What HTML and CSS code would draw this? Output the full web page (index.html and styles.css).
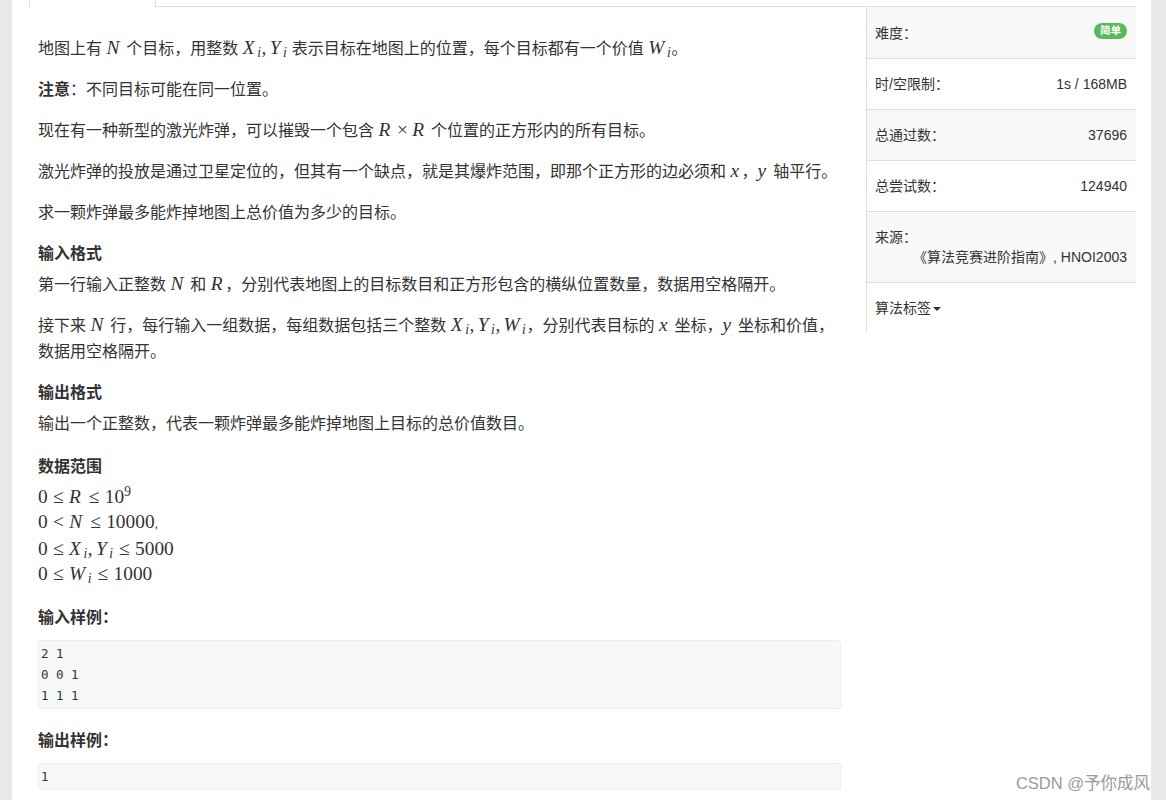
FILE: index.html
```html
<!DOCTYPE html>
<html lang="zh-CN">
<head>
<meta charset="utf-8">
<title>激光炸弹</title>
<link rel="stylesheet" href="styles.css">
</head>
<body>
<div class="page">
  <div class="tabs">
    <div class="tab-active"></div>
    <div class="tab-line"></div>
  </div>
  <div class="content">
    <div class="main">
      <p>地图上有 <span class="m"><i>N</i></span> 个目标，用整数 <span class="m"><i>X</i><sub>i</sub><span class="pc">,</span><i>Y</i><sub>i</sub></span> 表示目标在地图上的位置，每个目标都有一个价值 <span class="m"><i>W</i><sub>i</sub></span>。</p>
      <p><b>注意</b>：不同目标可能在同一位置。</p>
      <p>现在有一种新型的激光炸弹，可以摧毁一个包含 <span class="m"><i>R</i><span class="bin">×</span><i>R</i></span> 个位置的正方形内的所有目标。</p>
      <p>激光炸弹的投放是通过卫星定位的，但其有一个缺点，就是其爆炸范围，即那个正方形的边必须和 <span class="m"><i>x</i></span>，<span class="m"><i>y</i></span> 轴平行。</p>
      <p>求一颗炸弹最多能炸掉地图上总价值为多少的目标。</p>

      <h4 class="head">输入格式</h4>
      <p>第一行输入正整数 <span class="m"><i>N</i></span> 和 <span class="m"><i>R</i></span>，分别代表地图上的目标数目和正方形包含的横纵位置数量，数据用空格隔开。</p>
      <p>接下来 <span class="m"><i>N</i></span> 行，每行输入一组数据，每组数据包括三个整数 <span class="m"><i>X</i><sub>i</sub><span class="pc">,</span><i>Y</i><sub>i</sub><span class="pc">,</span><i>W</i><sub>i</sub></span>，分别代表目标的 <span class="m"><i>x</i></span> 坐标，<span class="m"><i>y</i></span> 坐标和价值，数据用空格隔开。</p>

      <h4 class="head">输出格式</h4>
      <p>输出一个正整数，代表一颗炸弹最多能炸掉地图上目标的总价值数目。</p>

      <h4 class="head range">数据范围</h4>
      <div class="mathblock">
        <div class="ml"><span class="m">0<span class="rel">≤</span><i>R</i><span class="rel">≤</span>10<sup>9</sup></span></div>
        <div class="ml"><span class="m">0<span class="rel">&lt;</span><i>N</i><span class="rel">≤</span>10000</span><span class="tc">,</span></div>
        <div class="ml"><span class="m">0<span class="rel">≤</span><i>X</i><sub>i</sub><span class="pc">,</span><i>Y</i><sub>i</sub><span class="rel">≤</span>5000</span></div>
        <div class="ml"><span class="m">0<span class="rel">≤</span><i>W</i><sub>i</sub><span class="rel">≤</span>1000</span></div>
      </div>

      <h4 class="head sample">输入样例：</h4>
      <pre class="code">2 1
0 0 1
1 1 1</pre>

      <h4 class="head sample">输出样例：</h4>
      <pre class="code last">1</pre>
    </div>

    <div class="side">
      <div class="row"><span>难度：</span><span class="badge">简单</span></div>
      <div class="row"><span>时/空限制：</span><span>1s / 168MB</span></div>
      <div class="row"><span>总通过数：</span><span>37696</span></div>
      <div class="row"><span>总尝试数：</span><span>124940</span></div>
      <div class="row src"><div>来源：</div><div class="val">《算法竞赛进阶指南》, HNOI2003</div></div>
      <div class="row"><span>算法标签<span class="caret"></span></span></div>
    </div>
  </div>
  <div class="wm">CSDN @予你成风</div>
</div>
</body>
</html>
```

FILE: styles.css
```css
html, body {
  margin: 0;
  padding: 0;
}

body {
  background: #e8e8e8;
  font-family: "Liberation Sans", "Noto Sans CJK SC", sans-serif;
  color: #333;
}

.page {
  position: relative;
  margin-left: 12px;
  width: 1139px;
  min-height: 800px;
  background: #fff;
}

.tabs {
  display: flex;
  margin-left: 17px;
  width: 1107px;
  height: 7px;
}

.tab-active {
  box-sizing: border-box;
  width: 127px;
  border-left: 1px solid #ddd;
  border-right: 1px solid #ddd;
}

.tab-line {
  box-sizing: border-box;
  flex: 1;
  border-bottom: 1px solid #ddd;
}

.content {
  display: flex;
  align-items: flex-start;
  margin-left: 17px;
  width: 1107px;
}

.main {
  box-sizing: border-box;
  width: 837px;
  padding: 29px 25px 0 9px;
}

.main p {
  margin: 0 0 15px;
  font-size: 16px;
  line-height: 26px;
}

.main b {
  font-weight: bold;
}

.head {
  margin: 0 0 5px;
  font-size: 16px;
  line-height: 26px;
  font-weight: bold;
}

.head.range {
  margin-top: 17px;
}

.head.sample {
  margin-bottom: 9px;
}

/* math */
.m {
  font-family: "Liberation Serif", "DejaVu Serif", serif;
  font-size: 1.21em;
  line-height: 1;
  white-space: nowrap;
}

.m i {
  font-style: italic;
  padding-right: 0.13em;
}

.m sub {
  font-size: 0.7em;
  font-style: italic;
  line-height: 0;
  vertical-align: -0.25em;
  padding-right: 0.05em;
}

.m sup {
  font-size: 0.7em;
  line-height: 0;
  vertical-align: 0.5em;
}

.m .rel {
  margin: 0 0.2778em;
}

.m .bin {
  margin: 0 0.2222em;
}

.m .pc {
  margin-right: 0.1667em;
}

.tc {
  font-size: 13px;
}

.mathblock {
  margin: 4px 0 18px;
  font-size: 16px;
}

.ml {
  line-height: 25.3px;
}

.code {
  margin: 0 0 19px;
  padding: 2px 2px;
  background: #f7f8fa;
  border: 1px solid #eceef1;
  border-radius: 3px;
  font-family: "DejaVu Sans Mono", "Liberation Mono", monospace;
  font-size: 12.5px;
  line-height: 21px;
  color: #333;
}

.code.last {
  margin-bottom: 0;
}

/* sidebar */
.side {
  box-sizing: border-box;
  width: 270px;
  border-left: 1px solid #ddd;
  font-size: 14px;
}

.row {
  display: flex;
  justify-content: space-between;
  align-items: center;
  padding: 15px 9px 15px 8px;
  line-height: 20px;
  border-top: 1px solid #ddd;
}

.row:first-child {
  border-top: 0;
  padding-top: 16px;
}

.row:nth-child(odd) {
  background: #f9f9f9;
}

.row.src {
  display: block;
}

.row.src .val {
  text-align: right;
}

.badge {
  display: inline-block;
  margin-bottom: 4px;
  padding: 2px 6px 3px;
  background: #5cb85c;
  color: #fff;
  font-size: 10.5px;
  font-weight: bold;
  line-height: 10.5px;
  border-radius: 8px;
}

.caret {
  display: inline-block;
  width: 0;
  height: 0;
  margin-left: 2px;
  vertical-align: middle;
  border-top: 4px solid #333;
  border-left: 4px solid transparent;
  border-right: 4px solid transparent;
}

.wm {
  position: absolute;
  top: 772px;
  right: 1px;
  font-size: 16.5px;
  line-height: 22px;
  color: #9a9a9a;
  text-shadow: 0 0 1px #fff;
}
```
